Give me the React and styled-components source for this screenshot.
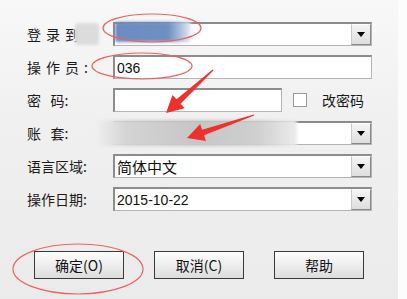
import React from "react";
import styled, { createGlobalStyle } from "styled-components";

const Global = createGlobalStyle`
  html, body { margin: 0; padding: 0; background: #fdfdfd; }
  body { font-family: "Noto Sans CJK SC", "Noto Sans", sans-serif; }
`;

const Page = styled.div`
  position: relative;
  width: 407px;
  height: 299px;
  overflow: hidden;
  background: #fcfcfc;
`;

const Panel = styled.div`
  width: 398px;
  height: 299px;
  box-sizing: border-box;
  padding: 22px 0 0 27px;
  background: linear-gradient(180deg, #f8f8f8 0%, #f0f0f0 40%, #ebebeb 100%);
  display: flex;
  flex-direction: column;
`;

const Form = styled.div`
  display: flex;
  flex-direction: column;
  gap: 9px;
`;

const Row = styled.div`
  display: flex;
  align-items: center;
  height: 24px;
  position: relative;
`;

const Label = styled.div`
  width: 86px;
  font-size: 14px;
  color: #1a1a1a;
  letter-spacing: ${(p) => p.$ls || 0}px;
  white-space: pre;
  line-height: 24px;
`;

const Field = styled.div`
  position: relative;
  box-sizing: border-box;
  width: ${(p) => p.$w || 259}px;
  height: 24px;
  background: #fff;
  border: 1px solid #b4b4b4;
  border-top: 2px solid #8c8c8c;
  border-left: 2px solid #8c8c8c;
  display: flex;
  align-items: center;
  padding-left: 2px;
  font-family: "Liberation Sans", "Noto Sans CJK SC", sans-serif;
  font-size: 14px;
  color: #111;
`;

const CjkText = styled.span`
  font-family: "Noto Sans CJK SC", sans-serif;
  font-size: 15px;
`;

const DropBtn = styled.div`
  position: absolute;
  right: 0;
  top: 0;
  bottom: 0;
  width: 20px;
  box-sizing: border-box;
  background: linear-gradient(180deg, #f4f4f4, #dedede);
  border-left: 1px solid #c8c8c8;
  border-top: 1px solid #fff;
  border-right: 1px solid #888;
  border-bottom: 1px solid #888;
  display: flex;
  align-items: center;
  justify-content: center;
  &::after {
    content: "";
    border-left: 4px solid transparent;
    border-right: 4px solid transparent;
    border-top: 5px solid #000;
  }
`;

const Blur = styled.div`
  position: absolute;
  left: ${(p) => p.$l}px;
  top: ${(p) => p.$t}px;
  width: ${(p) => p.$w}px;
  height: ${(p) => p.$h}px;
  background: ${(p) => p.$bg};
  filter: blur(1.5px);
  border-radius: 3px;
`;

const Check = styled.div`
  width: 14px;
  height: 14px;
  box-sizing: border-box;
  border: 1px solid #9a9a9a;
  background: #fff;
  margin-left: 11px;
`;

const CheckLabel = styled.span`
  margin-left: 15px;
  font-size: 14px;
  color: #1a1a1a;
`;

const Buttons = styled.div`
  display: flex;
  gap: 30px;
  margin-top: 40px;
  margin-left: 7px;
`;

const Button = styled.div`
  width: 90px;
  height: 28px;
  box-sizing: border-box;
  border: 1px solid #3a3a3a;
  background: linear-gradient(180deg, #fdfdfd 0%, #ececec 55%, #dcdcdc 100%);
  display: flex;
  align-items: center;
  justify-content: center;
  font-size: 14px;
  color: #111;
`;

const Overlay = styled.svg`
  position: absolute;
  left: 0;
  top: 0;
  pointer-events: none;
`;

function Arrow({ x1, y1, x2, y2 }) {
  const dx = x2 - x1, dy = y2 - y1;
  const len = Math.hypot(dx, dy);
  const ux = dx / len, uy = dy / len;
  const px = -uy, py = ux;
  const headLen = 17, headW = 9;
  const bx = x2 - ux * headLen, by = y2 - uy * headLen;
  const pts = [
    [x1 + px * 0.6, y1 + py * 0.6],
    [bx + px * 3, by + py * 3],
    [bx + px * headW, by + py * headW],
    [x2, y2],
    [bx - px * headW, by - py * headW],
    [bx - px * 3, by - py * 3],
    [x1 - px * 0.6, y1 - py * 0.6],
  ];
  return <polygon points={pts.map((p) => p.join(",")).join(" ")} fill="#f0302c" />;
}

export default function App() {
  return (
    <>
      <Global />
      <Page>
        <Panel>
          <Form>
            <Row>
              <Label $ls={5}>登录到</Label>
              <Field>
                <DropBtn />
              </Field>
              <Blur $l={48} $t={1} $w={24} $h={22} $bg="#dcdcdc" />
              <Blur $l={88} $t={0} $w={76} $h={20} $bg="linear-gradient(90deg,#6a8cc0 0%,#6f8fc2 70%,#a8bbdb 85%,#e8ecf4 100%)" />
            </Row>
            <Row>
              <Label $ls={5}>操作员:</Label>
              <Field>036</Field>
            </Row>
            <Row>
              <Label>{"密   码:"}</Label>
              <Field $w={169} />
              <Check />
              <CheckLabel>改密码</CheckLabel>
            </Row>
            <Row>
              <Label>{"账   套:"}</Label>
              <Field>
                <DropBtn />
              </Field>
              <Blur $l={70} $t={-1} $w={200} $h={26} $bg="linear-gradient(90deg,#eeeeee 0%,#d4d4d4 15%,#c6c6c6 50%,#cfcfcf 80%,#ececec 100%)" />
            </Row>
            <Row>
              <Label>语言区域:</Label>
              <Field>
                <CjkText>简体中文</CjkText>
                <DropBtn />
              </Field>
            </Row>
            <Row>
              <Label>操作日期:</Label>
              <Field>
                2015-10-22
                <DropBtn />
              </Field>
            </Row>
          </Form>
          <Buttons>
            <Button>确定(O)</Button>
            <Button>取消(C)</Button>
            <Button>帮助</Button>
          </Buttons>
        </Panel>
        <Overlay width="407" height="299" viewBox="0 0 407 299">
          <ellipse cx="152" cy="28" rx="49" ry="14" fill="none" stroke="#f06060" strokeWidth="1.2" />
          <ellipse cx="142" cy="66" rx="50" ry="13" fill="none" stroke="#f06060" strokeWidth="1.2" />
          <ellipse cx="78" cy="269" rx="65" ry="25" fill="none" stroke="#f06060" strokeWidth="1.2" />
          <Arrow x1={213} y1={70} x2={166} y2={113} />
          <Arrow x1={254} y1={115} x2={187} y2={138} />
        </Overlay>
      </Page>
    </>
  );
}
